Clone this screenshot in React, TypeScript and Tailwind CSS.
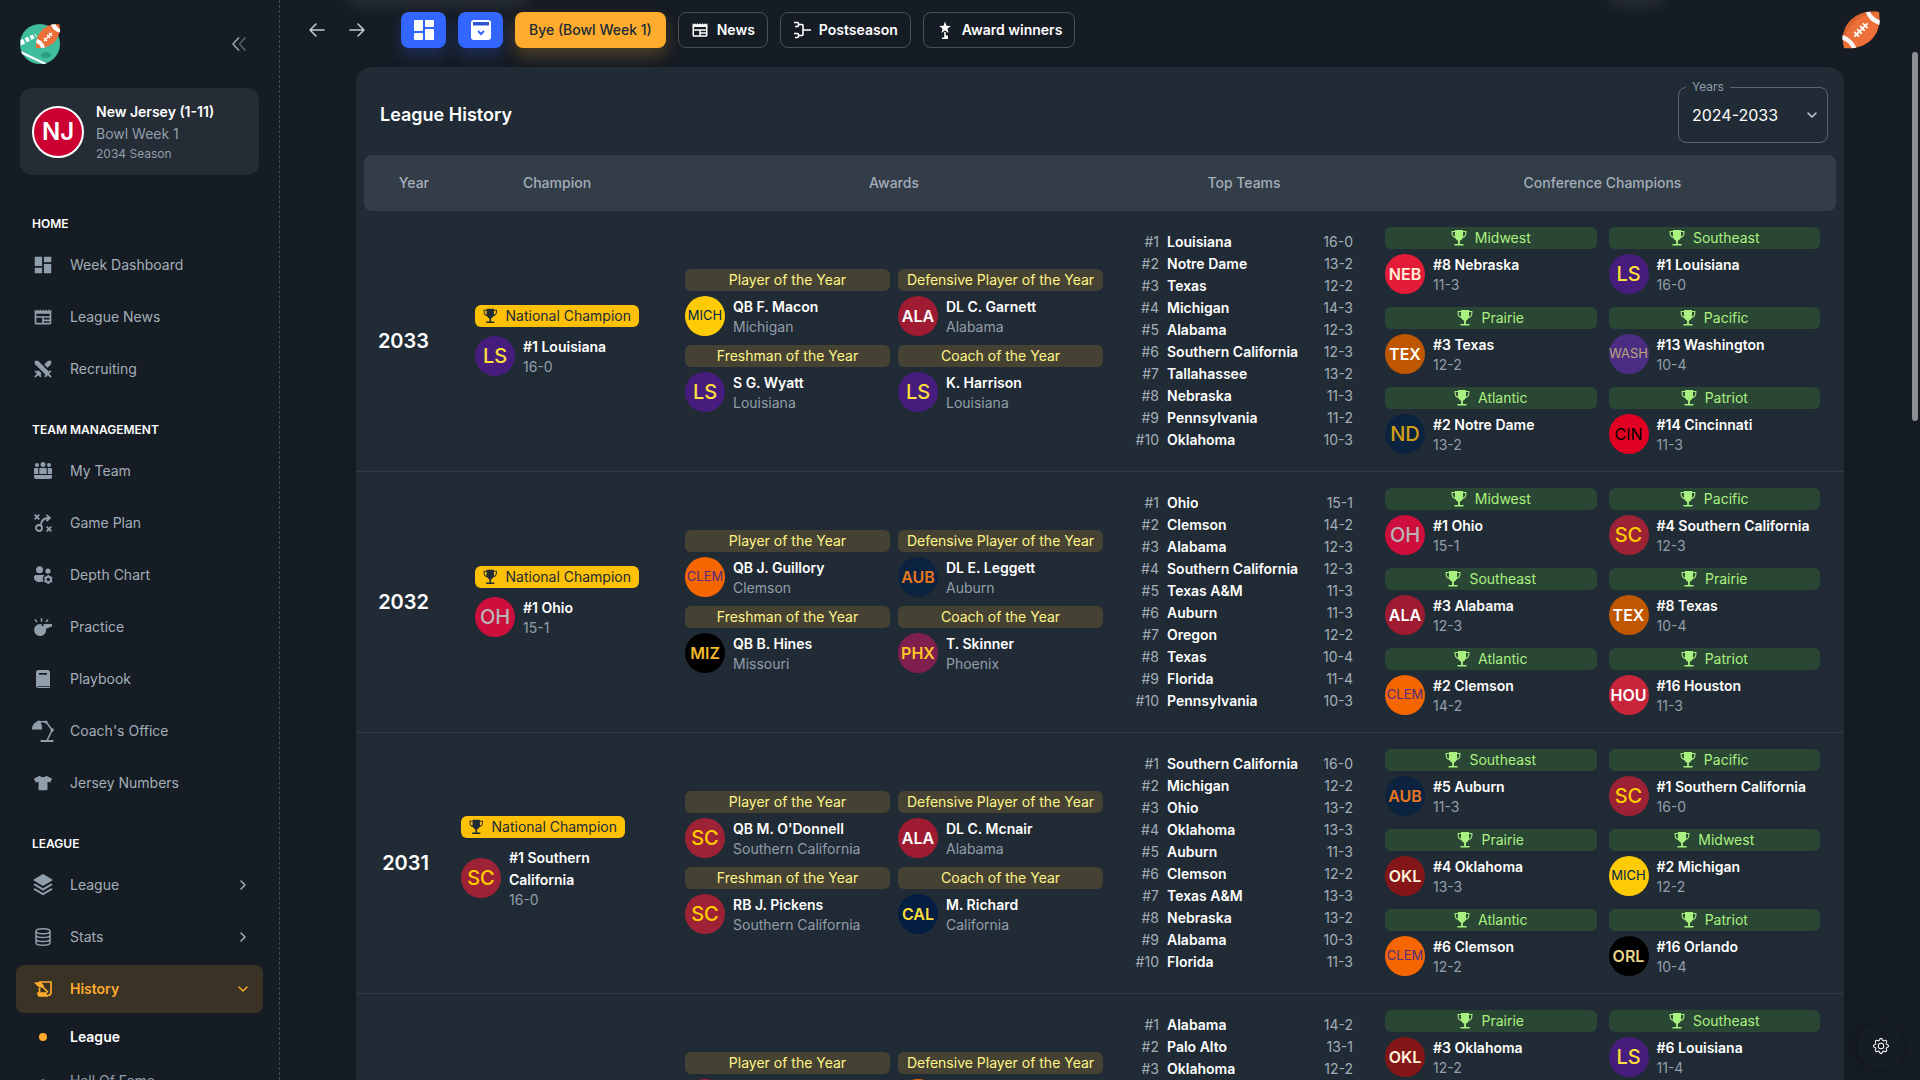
import { useState } from "react";
import type { ReactNode } from "react";
import clsx from "clsx";
import { MdDashboard, MdNewspaper } from "react-icons/md";
import { RiStackFill, RiSwordFill } from "react-icons/ri";
import { FaTshirt } from "react-icons/fa";
import { BsGear } from "react-icons/bs";

// ---------- Icons ----------

function TrophyIcon({ className }: { className?: string }) {
  return (
    <svg viewBox="0 0 16 16" className={className} aria-hidden="true">
      <path
        fill="currentColor"
        d="M4 0h8v1h3.4v2.2c0 2.6-1.5 4.4-3.7 4.9-.7 1.3-1.7 2.3-2.8 2.7v3.2h3.6v1.6h-9V14h3.6v-3.2C6 10.400 5 9.400 4.300 8.100 2.100 7.600.6 5.800.6 3.200V1H4zm0 2.100H1.700v1.100c0 1.700.8 3 2.100 3.500C3.900 5.200 4 3.600 4 2.100zm8 0c0 1.500.1 3.100.2 4.600 1.300-.5 2.100-1.800 2.100-3.500V2.100z"
      />
    </svg>
  );
}

function TeamIcon() {
  return (
    <svg viewBox="0 0 18 18" className="size-[18px]" fill="currentColor">
      <circle cx="3" cy="3" r="2" />
      <circle cx="9" cy="2.500" r="2.500" />
      <circle cx="15" cy="3" r="2" />
      <path d="M1 6h3.200v6H0V7a1 1 0 0 1 1-1zM6.300 6h5.400a1 1 0 0 1 1 1v5H5.300V7a1 1 0 0 1 1-1zM13.800 6H17a1 1 0 0 1 1 1v5h-4.200zM0 13h18v1.500A2.500 2.500 0 0 1 15.500 17h-13A2.500 2.500 0 0 1 0 14.500z" />
    </svg>
  );
}

function StrategyIcon() {
  return (
    <svg viewBox="0 0 18 18" className="size-[18px]" fill="none" stroke="currentColor" strokeWidth="1.800">
      <circle cx="5" cy="14" r="3" />
      <path d="M.7.7 5.300 5.300M5.300.7.7 5.300M12.700 12.700l4.600 4.600M17.300 12.700l-4.600 4.600M7 11.500c0-5 3-7.500 8-7.500M12.500.8 16 4l-3.500 3.200" />
    </svg>
  );
}

function DepthIcon() {
  return (
    <svg viewBox="0 0 19 18" className="h-[18px] w-[19px]" fill="currentColor">
      <circle cx="5.500" cy="3.700" r="3.500" />
      <circle cx="14" cy="5" r="2.600" />
      <path d="M2 9h8.500a5 5 0 0 0-.8 6.300C8.500 15.800 7 16 5.500 16 2.200 16 0 14.200 0 11.500A2 2 0 0 1 2 9z" />
      <circle cx="14.300" cy="13.500" r="2.700" fill="none" stroke="currentColor" strokeWidth="2" />
      <path
        d="M14.300 9v2M14.300 16v2M10.400 11.200l1.700 1M16.500 14.800l1.700 1M10.400 15.800l1.700-1M16.500 12.200l1.700-1"
        stroke="currentColor"
        strokeWidth="1.800"
      />
    </svg>
  );
}

function WhistleIcon() {
  return (
    <svg viewBox="0 0 18 18" className="size-[18px]" fill="currentColor">
      <path d="M6 6h1.600v2h2V6H18v2.600l-6 2.200A6 6 0 1 1 6 6z" />
      <path d="M7.500 0v3.800M1 1.500l2 2.500M14 1.500l-2 2.500" stroke="currentColor" strokeWidth="1.400" />
    </svg>
  );
}

function BookIcon() {
  return (
    <svg viewBox="0 0 14 18" className="h-[18px] w-3.5" fill="currentColor">
      <path
        fillRule="evenodd"
        d="M2.500 0h9A2.500 2.500 0 0 1 14 2.500V16H1.500c0 .6.400.8 1 .8H14V18H2.500A2.500 2.500 0 0 1 0 15.500v-13A2.500 2.500 0 0 1 2.500 0zM3 3v1.800h8V3z"
      />
    </svg>
  );
}

function LampIcon() {
  return (
    <svg viewBox="0 0 22 22" className="size-[22px]" fill="currentColor">
      <path d="M4.500 1.500 7 .3l1.500 2c1 1.800 1.800 4 1.500 7.200H0c0-3.500 1.600-6.500 4-7z" />
      <path d="M6 1.700h8l6.200 8.300L15 20.500" fill="none" stroke="currentColor" strokeWidth="1.600" />
      <circle cx="14" cy="2" r="1.500" />
      <circle cx="20.200" cy="10" r="1.700" />
      <path d="M10 20h10a1 1 0 0 1 1 2H9a1 1 0 0 1 1-2z" />
    </svg>
  );
}

function DatabaseIcon() {
  return (
    <svg viewBox="0 0 16 18" className="h-[18px] w-4" fill="none" stroke="currentColor" strokeWidth="1.500">
      <ellipse cx="8" cy="3.300" rx="7" ry="2.500" />
      <path d="M1 3.300v11.400c0 1.400 3 2.500 7 2.500s7-1.100 7-2.500V3.300M1 7.100c0 1.400 3 2.500 7 2.500s7-1.100 7-2.500M1 10.900c0 1.400 3 2.500 7 2.500s7-1.100 7-2.500" />
    </svg>
  );
}

function ScrollIcon() {
  return (
    <svg viewBox="0 0 18 16" className="h-4 w-[18px]" fill="none" stroke="currentColor" strokeWidth="1.700">
      <path d="M5 1h12v10.500a2.800 2.800 0 0 1-2.800 2.800" />
      <path d="M5 12h7v.8c0 1.500 1 2.200 2 2.200H6.500A2.500 2.500 0 0 1 4 12.500V12z" fill="currentColor" />
      <path d="M5.500 6.500V12M8.500 5.500l5.500 5.800" />
      <path d="M0 1.500 7 1l3 4-1.500 2L4 5.500z" fill="currentColor" stroke="none" />
    </svg>
  );
}

function Chevron({ d, className }: { d: string; className?: string }) {
  return (
    <svg
      viewBox="0 0 16 16"
      className={clsx("size-4", className)}
      fill="none"
      stroke="currentColor"
      strokeWidth="1.500"
      strokeLinecap="round"
      strokeLinejoin="round"
    >
      <path d={d} />
    </svg>
  );
}

function BracketIcon() {
  return (
    <svg viewBox="0 0 18 18" className="size-[18px]" fill="none" stroke="currentColor" strokeWidth="1.600">
      <path d="M1 1.500h3.500a1 1 0 0 1 1 1v2a1 1 0 0 1-1 1H2M5.500 3.500H9a1 1 0 0 1 1 1v9a1 1 0 0 1-1 1H5.500M1 12.500h3.500a1 1 0 0 1 1 1v2a1 1 0 0 1-1 1H2M10 9h8" />
    </svg>
  );
}

function StarStandIcon() {
  return (
    <svg viewBox="0 0 18 18" className="size-[18px]" fill="currentColor">
      <path d="m9 .5 1.500 4.300 4.300.2-3.400 2.700 1.200 4.300L9 9.500 5.400 12l1.200-4.300L3.200 5l4.300-.2zM8.200 11h1.600v3.500H12V18H6v-1.500h2.200z" />
    </svg>
  );
}

function DashboardTiles() {
  return (
    <svg viewBox="0 0 20 20" className="size-5" fill="currentColor">
      <rect width="9" height="11" rx="1" />
      <rect x="11" width="9" height="7" rx="1" />
      <rect y="13" width="9" height="7" rx="1" />
      <rect x="11" y="9" width="9" height="11" rx="1" />
    </svg>
  );
}

function CalendarDown() {
  return (
    <svg viewBox="0 0 20 20" className="size-5">
      <rect width="20" height="20" rx="3" fill="white" />
      <path d="M2 2h16v3.500H2z" fill="#2f55cf" />
      <path d="m7 11 3 3 3-3" fill="none" stroke="#3366ff" strokeWidth="2" />
    </svg>
  );
}

function Football({ className }: { className?: string }) {
  return (
    <svg viewBox="0 0 40 40" className={className} aria-hidden="true">
      <path d="M39 1c2 13-2 24-9 30S14 40 2 39C-1 26 3 15 10 9S26-1 39 1z" fill="#ed7039" />
      <path d="M36 1c-8-1-19 1-26 8S0 24 1 34C4 22 9 15 15 10S27 3 36 1z" fill="#d9622f" />
      <path d="M25 1.200c2 6 7 11 14.300 13.500.4-2 .5-3.500.5-5C35 8 31.500 5 29.500.8zM15 38.800C13 33 8 28 .7 25.300c-.3 2-.3 3.500-.2 5C5 32 8.500 35 10.500 39.200z" fill="#f5f5f5" />
      <path d="m13 27 14-14M13 22l5 5M16 19l5 5M19 16l5 5M22 13l5 5" stroke="#fff" strokeWidth="1.800" />
    </svg>
  );
}

function Logo() {
  return (
    <svg viewBox="0 0 40 40" className="size-10" aria-hidden="true">
      <circle cx="20" cy="20" r="20" fill="#3fbd9c" />
      <path d="M1 27 27 39.500l-4 .5L2 30zM.5 16 15 9.500l2 3.500L1 21.500z" fill="#fff" />
      <path d="m3 13 4 8M8 11l4 8M13 9l4 8" stroke="#3fbd9c" strokeWidth="1.700" />
      <ellipse cx="26" cy="31" rx="5" ry="3" fill="#2d9f81" />
      <path d="M39.500.5c2 13-7 25-23.500 23.500C15 10 25-1.500 39.500.5z" fill="#ed7039" />
      <path d="M31 .5c1 4 4 7 9 8V5c-2-1-3.500-2.500-4.500-4.800zM25 23.500c-1-4-4-7.500-8-8.500l-1 4c3 1 4.500 2.500 5 5z" fill="#fff" />
      <path d="m24 17 8-8M24 14l3 3M27 11l3 3M29 9l3 3" stroke="#fff" strokeWidth="1.300" />
    </svg>
  );
}

// ---------- Data ----------

const teams: Record<string, { abbr: string; style: string }> = {
  Louisiana: { abbr: "LS", style: "bg-[#461d7c] text-[#fddf3c]" },
  Michigan: { abbr: "MICH", style: "bg-[#ffcb05] text-[#00274c]" },
  Alabama: { abbr: "ALA", style: "bg-[#9e1b32] text-white" },
  Nebraska: { abbr: "NEB", style: "bg-[#e41c38] text-[#fdf2d9]" },
  Texas: { abbr: "TEX", style: "bg-[#bf5700] text-white" },
  Washington: { abbr: "WASH", style: "bg-[#4b2e83] text-[#b7a57a]" },
  "Notre Dame": { abbr: "ND", style: "bg-[#0c2340] text-[#d39f10]" },
  Cincinnati: { abbr: "CIN", style: "bg-[#e00122] text-black font-normal!" },
  Ohio: { abbr: "OH", style: "bg-[#ce0f3d] text-[#b6b6b6]" },
  Clemson: { abbr: "CLEM", style: "bg-[#f56600] text-[#522d80]" },
  Auburn: { abbr: "AUB", style: "bg-[#0c2340] text-[#e87722]" },
  Missouri: { abbr: "MIZ", style: "bg-black text-[#f1b82d]" },
  Phoenix: { abbr: "PHX", style: "bg-[#7f1f4e] text-[#ffc627]" },
  "Southern California": { abbr: "SC", style: "bg-[#9d2235] text-[#ffcc00]" },
  Houston: { abbr: "HOU", style: "bg-[#c8243a] text-white" },
  California: { abbr: "CAL", style: "bg-[#041e42] text-[#fddd3c]" },
  Oklahoma: { abbr: "OKL", style: "bg-[#841617] text-[#fdf2d9]" },
  Orlando: { abbr: "ORL", style: "bg-black text-[#e6d58a]" },
};

const awardNames = [
  "Player of the Year",
  "Defensive Player of the Year",
  "Freshman of the Year",
  "Coach of the Year",
];

type Season = {
  year: number;
  champion: [string, string];
  awards: [string, string][];
  top: [string, string][];
  conferences: [string, number, string, string][];
};

const seasons: Season[] = [
  {
    year: 2033,
    champion: ["Louisiana", "16-0"],
    awards: [
      ["QB F. Macon", "Michigan"],
      ["DL C. Garnett", "Alabama"],
      ["S G. Wyatt", "Louisiana"],
      ["K. Harrison", "Louisiana"],
    ],
    top: [
      ["Louisiana", "16-0"],
      ["Notre Dame", "13-2"],
      ["Texas", "12-2"],
      ["Michigan", "14-3"],
      ["Alabama", "12-3"],
      ["Southern California", "12-3"],
      ["Tallahassee", "13-2"],
      ["Nebraska", "11-3"],
      ["Pennsylvania", "11-2"],
      ["Oklahoma", "10-3"],
    ],
    conferences: [
      ["Midwest", 8, "Nebraska", "11-3"],
      ["Southeast", 1, "Louisiana", "16-0"],
      ["Prairie", 3, "Texas", "12-2"],
      ["Pacific", 13, "Washington", "10-4"],
      ["Atlantic", 2, "Notre Dame", "13-2"],
      ["Patriot", 14, "Cincinnati", "11-3"],
    ],
  },
  {
    year: 2032,
    champion: ["Ohio", "15-1"],
    awards: [
      ["QB J. Guillory", "Clemson"],
      ["DL E. Leggett", "Auburn"],
      ["QB B. Hines", "Missouri"],
      ["T. Skinner", "Phoenix"],
    ],
    top: [
      ["Ohio", "15-1"],
      ["Clemson", "14-2"],
      ["Alabama", "12-3"],
      ["Southern California", "12-3"],
      ["Texas A&M", "11-3"],
      ["Auburn", "11-3"],
      ["Oregon", "12-2"],
      ["Texas", "10-4"],
      ["Florida", "11-4"],
      ["Pennsylvania", "10-3"],
    ],
    conferences: [
      ["Midwest", 1, "Ohio", "15-1"],
      ["Pacific", 4, "Southern California", "12-3"],
      ["Southeast", 3, "Alabama", "12-3"],
      ["Prairie", 8, "Texas", "10-4"],
      ["Atlantic", 2, "Clemson", "14-2"],
      ["Patriot", 16, "Houston", "11-3"],
    ],
  },
  {
    year: 2031,
    champion: ["Southern California", "16-0"],
    awards: [
      ["QB M. O'Donnell", "Southern California"],
      ["DL C. Mcnair", "Alabama"],
      ["RB J. Pickens", "Southern California"],
      ["M. Richard", "California"],
    ],
    top: [
      ["Southern California", "16-0"],
      ["Michigan", "12-2"],
      ["Ohio", "13-2"],
      ["Oklahoma", "13-3"],
      ["Auburn", "11-3"],
      ["Clemson", "12-2"],
      ["Texas A&M", "13-3"],
      ["Nebraska", "13-2"],
      ["Alabama", "10-3"],
      ["Florida", "11-3"],
    ],
    conferences: [
      ["Southeast", 5, "Auburn", "11-3"],
      ["Pacific", 1, "Southern California", "16-0"],
      ["Prairie", 4, "Oklahoma", "13-3"],
      ["Midwest", 2, "Michigan", "12-2"],
      ["Atlantic", 6, "Clemson", "12-2"],
      ["Patriot", 16, "Orlando", "10-4"],
    ],
  },
  {
    year: 2030,
    champion: ["Alabama", "14-2"],
    awards: [
      ["QB R. Dalton", "Alabama"],
      ["DL M. Boone", "Clemson"],
      ["RB T. Ellis", "Texas"],
      ["J. Monroe", "Alabama"],
    ],
    top: [
      ["Alabama", "14-2"],
      ["Palo Alto", "13-1"],
      ["Oklahoma", "12-2"],
      ["Ohio", "12-3"],
      ["Clemson", "12-2"],
      ["Louisiana", "11-4"],
      ["Texas", "11-3"],
      ["Michigan", "11-3"],
      ["Auburn", "10-3"],
      ["Florida", "10-3"],
    ],
    conferences: [
      ["Prairie", 3, "Oklahoma", "12-2"],
      ["Southeast", 6, "Louisiana", "11-4"],
      ["Midwest", 4, "Ohio", "12-3"],
      ["Pacific", 13, "Washington", "10-4"],
      ["Atlantic", 5, "Clemson", "12-2"],
      ["Patriot", 14, "Cincinnati", "11-3"],
    ],
  },
];

type NavEntry = { label: string; icon: ReactNode; expandable?: boolean };

const navSections: { title: string; items: NavEntry[] }[] = [
  {
    title: "HOME",
    items: [
      { label: "Week Dashboard", icon: <MdDashboard className="size-[22px]" /> },
      { label: "League News", icon: <MdNewspaper className="size-5" /> },
      { label: "Recruiting", icon: <RiSwordFill className="size-[22px]" /> },
    ],
  },
  {
    title: "TEAM MANAGEMENT",
    items: [
      { label: "My Team", icon: <TeamIcon /> },
      { label: "Game Plan", icon: <StrategyIcon /> },
      { label: "Depth Chart", icon: <DepthIcon /> },
      { label: "Practice", icon: <WhistleIcon /> },
      { label: "Playbook", icon: <BookIcon /> },
      { label: "Coach's Office", icon: <LampIcon /> },
      { label: "Jersey Numbers", icon: <FaTshirt className="size-[18px]" /> },
    ],
  },
  {
    title: "LEAGUE",
    items: [
      { label: "League", icon: <RiStackFill className="size-6" />, expandable: true },
      { label: "Stats", icon: <DatabaseIcon />, expandable: true },
    ],
  },
];

// ---------- Sidebar ----------

function NavItem({ label, icon, expandable }: NavEntry) {
  return (
    <a href="#" className="flex h-12 items-center rounded-lg pr-3 pl-[15px] text-sm text-[#a3aeb9]">
      <span className="mr-[15px] flex size-6 items-center justify-center text-[#919eab]">{icon}</span>
      <span className="flex-1">{label}</span>
      {expandable && <Chevron d="m6 4 4 4-4 4" />}
    </a>
  );
}

function Sidebar() {
  return (
    <aside className="flex w-[280px] shrink-0 flex-col overflow-hidden border-r border-dashed border-[#434a53]">
      <div className="flex items-center justify-between pt-6 pr-8 pb-6 pl-5">
        <Logo />
        <button type="button" aria-label="Collapse menu" className="text-[#919eab]">
          <svg viewBox="0 0 16 16" className="size-4" fill="none" stroke="currentColor" strokeWidth="1.700" strokeLinecap="round" strokeLinejoin="round">
            <path d="M7.500 2 2 8l5.500 6" />
            <path d="M14 2 8.500 8l5.500 6" opacity="0.500" />
          </svg>
        </button>
      </div>

      <a href="#" className="mx-5 flex h-[87px] shrink-0 items-center gap-3 rounded-xl bg-[#252c35] px-3">
        <span className="flex size-[52px] items-center justify-center rounded-full border-2 border-white bg-[#cc0033] text-2xl font-semibold text-white">
          NJ
        </span>
        <span className="flex flex-col">
          <strong className="text-sm leading-[22px] font-semibold text-white">New Jersey (1-11)</strong>
          <span className="text-sm leading-[22px] text-[#919eab]">Bowl Week 1</span>
          <span className="text-xs leading-[18px] text-[#919eab]">2034 Season</span>
        </span>
      </a>

      <nav className="px-4 pt-4">
        {navSections.map((section) => (
          <div key={section.title}>
            <h2 className="px-4 pt-6 pb-2 text-xs leading-[18px] font-semibold text-white">{section.title}</h2>
            <div className="flex flex-col gap-1 pb-1">
              {section.items.map((item) => (
                <NavItem key={item.label} {...item} />
              ))}
            </div>
          </div>
        ))}

        <a href="#" className="flex h-12 items-center rounded-lg bg-[#3b3226] pr-3 pl-[15px] text-sm font-semibold text-[#ffab2d]">
          <span className="mr-[15px] flex size-6 items-center justify-center">
            <ScrollIcon />
          </span>
          <span className="flex-1">History</span>
          <Chevron d="m4 6 4 4 4-4" />
        </a>
        <div className="flex flex-col gap-1 pt-1">
          <a href="#" className="flex h-10 items-center pl-[15px] text-sm font-semibold text-white">
            <span className="mr-[15px] flex size-6 items-center justify-center">
              <span className="size-2 rounded-full bg-[#ffab2d]" />
            </span>
            League
          </a>
          <a href="#" className="flex h-10 items-center pl-[15px] text-sm text-[#919eab]">
            <span className="mr-[15px] flex size-6 items-center justify-center">
              <span className="size-1 rounded-full bg-[#637381]" />
            </span>
            Hall Of Fame
          </a>
        </div>
      </nav>
    </aside>
  );
}

// ---------- Header ----------

function OutlineButton({ icon, label }: { icon: ReactNode; label: string }) {
  return (
    <button
      type="button"
      className="flex h-9 items-center gap-2 rounded-lg border border-[#48505a] px-3 text-sm font-semibold text-white"
    >
      {icon}
      {label}
    </button>
  );
}

function TopBar() {
  return (
    <header className="flex items-center gap-3 pt-3 pr-10 pl-[29px]">
      <div className="mr-6 flex gap-6 text-[#c4cdd5]">
        <button type="button" aria-label="Back">
          <Chevron d="M15 8H1m6-6L1 8l6 6" />
        </button>
        <button type="button" aria-label="Forward">
          <Chevron d="M1 8h14M9 2l6 6-6 6" />
        </button>
      </div>
      <button
        type="button"
        aria-label="Dashboard"
        className="flex h-9 w-[45px] items-center justify-center rounded-lg bg-[#3366ff] text-white shadow-[0_8px_16px_rgba(51,102,255,0.24)]"
      >
        <DashboardTiles />
      </button>
      <button
        type="button"
        aria-label="Schedule"
        className="flex h-9 w-[45px] items-center justify-center rounded-lg bg-[#3366ff] shadow-[0_8px_16px_rgba(51,102,255,0.24)]"
      >
        <CalendarDown />
      </button>
      <button
        type="button"
        className="h-9 rounded-lg bg-[#ffab2d] px-3.5 text-sm font-medium text-[#212b36] shadow-[0_8px_16px_rgba(255,171,45,0.24)]"
      >
        Bye (Bowl Week 1)
      </button>
      <OutlineButton icon={<MdNewspaper className="size-[18px]" />} label="News" />
      <OutlineButton icon={<BracketIcon />} label="Postseason" />
      <OutlineButton icon={<StarStandIcon />} label="Award winners" />
      <Football className="-my-1 ml-auto size-[38px]" />
    </header>
  );
}

// ---------- League history table ----------

function TeamLogo({ name }: { name: string }) {
  const { abbr, style } = teams[name];
  return (
    <span
      className={clsx(
        "flex size-10 shrink-0 items-center justify-center rounded-full",
        abbr.length === 2 && "text-xl font-medium",
        abbr.length === 3 && "text-base font-semibold",
        abbr.length === 4 && "text-[13px] font-normal",
        style,
      )}
    >
      {abbr}
    </span>
  );
}

function TeamEntry({ team, title, detail }: { team: string; title: string; detail: string }) {
  return (
    <div className="flex items-center gap-2">
      <TeamLogo name={team} />
      <div>
        <a href="#" className="block text-sm leading-[22px] font-semibold text-white">
          {title}
        </a>
        <div className="text-sm leading-[18px] text-[#919eab]">{detail}</div>
      </div>
    </div>
  );
}

function Badge({ tone, children }: { tone: "gold" | "yellow" | "green"; children: ReactNode }) {
  return (
    <div
      className={clsx(
        "flex h-[22px] items-center justify-center gap-2 rounded-md px-2 text-sm whitespace-nowrap",
        tone === "gold" && "w-[164px] bg-[#ffc107] text-[#212b36]",
        tone === "yellow" && "bg-[#454234] text-[#fff587]",
        tone === "green" && "bg-[#2a4635] text-[#aaf27f]",
      )}
    >
      {tone !== "yellow" && <TrophyIcon className="size-4" />}
      {children}
    </div>
  );
}

function SeasonRow({ season }: { season: Season }) {
  const cell = "border-b border-[#303b46]";
  return (
    <tr className="h-[261px]">
      <td className={clsx(cell, "py-4 pr-4 text-right text-xl font-semibold text-white")}>{season.year}</td>
      <td className={clsx(cell, "px-4 pt-3.5 pb-4")}>
        <div className="mx-auto flex w-fit flex-col gap-[9px]">
          <Badge tone="gold">National Champion</Badge>
          <TeamEntry team={season.champion[0]} title={`#1 ${season.champion[0]}`} detail={season.champion[1]} />
        </div>
      </td>
      <td className={clsx(cell, "px-4 pt-3.5 pb-4")}>
        <div className="grid grid-cols-2 gap-x-2 gap-y-[9px]">
          {season.awards.map(([player, team], i) => (
            <div key={awardNames[i]} className="flex flex-col gap-[5px]">
              <Badge tone="yellow">{awardNames[i]}</Badge>
              <TeamEntry team={team} title={player} detail={team} />
            </div>
          ))}
        </div>
      </td>
      <td className={clsx(cell, "p-4")}>
        <ol>
          {season.top.map(([team, record], i) => (
            <li key={team} className="flex gap-2 text-sm leading-[22px] text-[#a3aeb9]">
              <span className="w-6 text-right">#{i + 1}</span>
              <a href="#" className="flex-1 font-semibold text-white">
                {team}
              </a>
              <span>{record}</span>
            </li>
          ))}
        </ol>
      </td>
      <td className={clsx(cell, "pt-3.5 pr-6 pb-4 pl-4")}>
        <div className="grid grid-cols-2 gap-x-3 gap-y-[13px]">
          {season.conferences.map(([conference, rank, team, record]) => (
            <div key={conference} className="flex flex-col gap-[5px]">
              <Badge tone="green">{conference}</Badge>
              <TeamEntry team={team} title={`#${rank} ${team}`} detail={record} />
            </div>
          ))}
        </div>
      </td>
    </tr>
  );
}

function LeagueHistory() {
  const [years, setYears] = useState("2024-2033");
  const head = "bg-[#333d48] bg-clip-padding h-14 px-4 font-medium";

  return (
    <section className="rounded-2xl bg-[#212b35] shadow-[0_12px_24px_-4px_rgba(0,0,0,0.200)]">
      <div className="flex items-center justify-between pt-5 pr-4 pb-3 pl-6">
        <h1 className="text-lg font-semibold text-white">League History</h1>
        <div className="relative">
          <label htmlFor="years" className="absolute -top-2 left-2 bg-[#212b35] px-1.5 text-xs leading-4 text-[#919eab]">
            Years
          </label>
          <select
            id="years"
            value={years}
            onChange={(e) => setYears(e.target.value)}
            className="h-14 w-[150px] appearance-none rounded-lg border border-[#5b6672] bg-transparent pl-[13px] text-base text-white"
          >
            <option>2024-2033</option>
          </select>
          <Chevron d="m4 6 4 4 4-4" className="pointer-events-none absolute top-5 right-2 text-[#c4cdd5]" />
        </div>
      </div>

      <table className="w-full table-fixed border-separate border-spacing-0">
        <colgroup>
          <col className="w-[89px]" />
          <col className="w-56" />
          <col className="w-[450px]" />
          <col className="w-[250px]" />
          <col />
        </colgroup>
        <thead>
          <tr className="text-sm text-[#a3aeb9]">
            <th scope="col" className={clsx(head, "rounded-tl-[16px_8px] rounded-bl-[16px_8px] border-l-8 border-transparent text-right")}>
              Year
            </th>
            <th scope="col" className={head}>Champion</th>
            <th scope="col" className={head}>Awards</th>
            <th scope="col" className={head}>Top Teams</th>
            <th scope="col" className={clsx(head, "rounded-tr-[16px_8px] rounded-br-[16px_8px] border-r-8 border-transparent")}>
              Conference Champions
            </th>
          </tr>
        </thead>
        <tbody>
          {seasons.map((season) => (
            <SeasonRow key={season.year} season={season} />
          ))}
        </tbody>
      </table>
    </section>
  );
}

export default function App() {
  return (
    <div className="relative flex h-screen overflow-hidden bg-[#161c24] font-['Inter',sans-serif]">
      <Sidebar />
      <div className="min-w-0 flex-1 overflow-hidden">
        <TopBar />
        <main className="mx-auto max-w-[1536px] px-6 pt-[19px]">
          <LeagueHistory />
        </main>
      </div>

      <div className="absolute -top-3 left-[350px] h-4 w-44 bg-white/10 blur-sm" />
      <div className="absolute -top-3 left-[1612px] h-4 w-12 bg-white/10 blur-sm" />

      <button
        type="button"
        aria-label="Settings"
        className="absolute right-[15px] bottom-[10px] flex size-12 items-center justify-center rounded-full bg-[#161c24] text-white shadow-[0_0_8px_rgba(0,0,0,0.300)]"
      >
        <BsGear className="size-4" />
      </button>
      <div className="absolute top-[52px] right-0.5 h-[369px] w-1.5 rounded-full bg-[#8b8f94]" />
    </div>
  );
}
